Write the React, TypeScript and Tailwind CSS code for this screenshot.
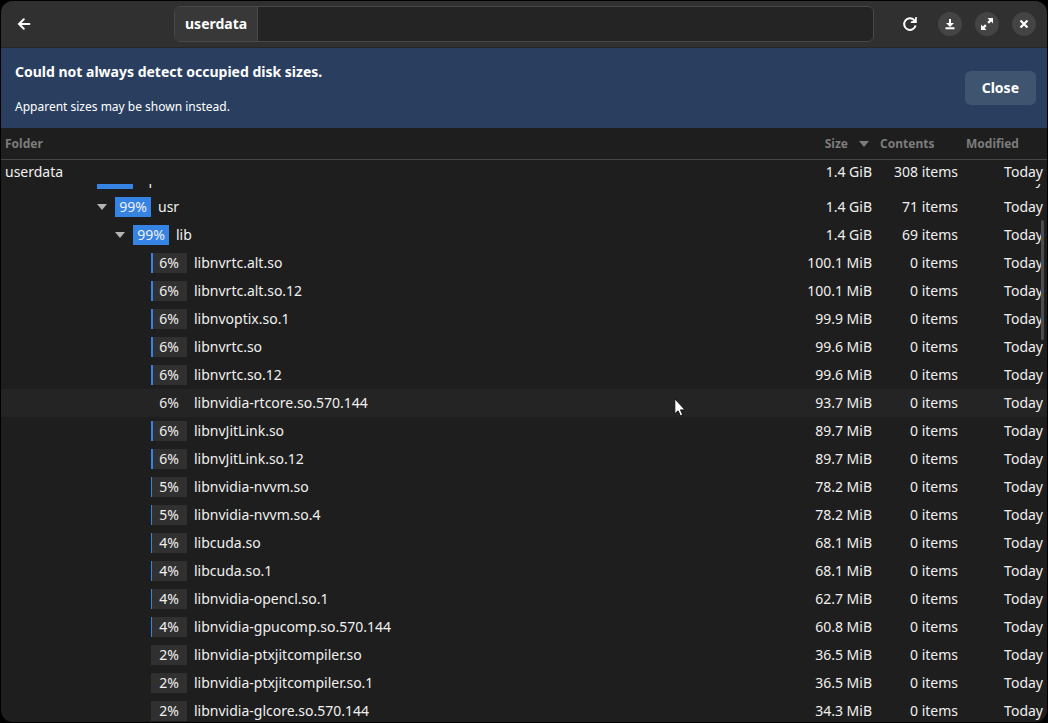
import { useLayoutEffect, useRef, useState } from "react";

interface FolderRow {
  name: string;
  depth: number;
  percent: number;
  size: string;
  items: string;
  expanded?: boolean;
}

const rows: FolderRow[] = [
  { name: "opt", depth: 3, percent: 99, size: "1.4 GiB", items: "72 items", expanded: true },
  { name: "usr", depth: 4, percent: 99, size: "1.4 GiB", items: "71 items", expanded: true },
  { name: "lib", depth: 5, percent: 99, size: "1.4 GiB", items: "69 items", expanded: true },
  { name: "libnvrtc.alt.so", depth: 6, percent: 6, size: "100.1 MiB", items: "0 items" },
  { name: "libnvrtc.alt.so.12", depth: 6, percent: 6, size: "100.1 MiB", items: "0 items" },
  { name: "libnvoptix.so.1", depth: 6, percent: 6, size: "99.9 MiB", items: "0 items" },
  { name: "libnvrtc.so", depth: 6, percent: 6, size: "99.6 MiB", items: "0 items" },
  { name: "libnvrtc.so.12", depth: 6, percent: 6, size: "99.6 MiB", items: "0 items" },
  { name: "libnvidia-rtcore.so.570.144", depth: 6, percent: 6, size: "93.7 MiB", items: "0 items" },
  { name: "libnvJitLink.so", depth: 6, percent: 6, size: "89.7 MiB", items: "0 items" },
  { name: "libnvJitLink.so.12", depth: 6, percent: 6, size: "89.7 MiB", items: "0 items" },
  { name: "libnvidia-nvvm.so", depth: 6, percent: 5, size: "78.2 MiB", items: "0 items" },
  { name: "libnvidia-nvvm.so.4", depth: 6, percent: 5, size: "78.2 MiB", items: "0 items" },
  { name: "libcuda.so", depth: 6, percent: 4, size: "68.1 MiB", items: "0 items" },
  { name: "libcuda.so.1", depth: 6, percent: 4, size: "68.1 MiB", items: "0 items" },
  { name: "libnvidia-opencl.so.1", depth: 6, percent: 4, size: "62.7 MiB", items: "0 items" },
  { name: "libnvidia-gpucomp.so.570.144", depth: 6, percent: 4, size: "60.8 MiB", items: "0 items" },
  { name: "libnvidia-ptxjitcompiler.so", depth: 6, percent: 2, size: "36.5 MiB", items: "0 items" },
  { name: "libnvidia-ptxjitcompiler.so.1", depth: 6, percent: 2, size: "36.5 MiB", items: "0 items" },
  { name: "libnvidia-glcore.so.570.144", depth: 6, percent: 2, size: "34.3 MiB", items: "0 items" },
];

function Columns() {
  return (
    <colgroup>
      <col />
      <col className="w-[86px]" />
      <col className="w-[86px]" />
      <col className="w-[85px]" />
    </colgroup>
  );
}

function UsageBadge({ percent, hovered }: { percent: number; hovered: boolean }) {
  // Whole pixels only, so anything under 3% has no bar
  const barWidth = percent === 99 ? 36 : Math.floor((percent / 100) * 36);
  return (
    <span className={`relative block h-5 w-9 shrink-0 text-center leading-5 ${hovered ? "" : "bg-[#303030]"}`}>
      {!hovered && (
        <span
          className="absolute inset-y-0 left-0 bg-[#3584e4]"
          style={{ width: barWidth }}
        />
      )}
      <span className="relative">{percent}%</span>
    </span>
  );
}

function HeaderBar() {
  return (
    <header className="flex h-[47px] shrink-0 items-center border-b border-[#262626] bg-[#303030] pr-[11px] text-white">
      <button aria-label="Back" className="ml-[15px] flex size-4 items-center justify-center">
        <svg viewBox="0 0 16 16" className="size-4" fill="none" stroke="currentColor" strokeWidth="2" strokeLinecap="round">
          <path d="M13.4 8H3.4M7.8 3.2 3 8l4.8 4.8" />
        </svg>
      </button>
      <nav className="mr-7 ml-[142px] flex h-9 flex-1 overflow-hidden rounded-md border border-[#484848] bg-[#242424]">
        <button className="border-r border-[#484848] bg-[#383838] px-[10px] text-sm font-bold">userdata</button>
      </nav>
      <div className="flex items-center">
        <button aria-label="Rescan" className="mr-5 flex size-4 items-center justify-center">
          <svg viewBox="0 0 16 16" className="size-4" fill="none">
            <path d="M13.6 9.5A5.8 5.8 0 1 1 12.3 4.2" stroke="currentColor" strokeWidth="2" />
            <path d="M14.8 1v6H8.8V5.6L10.8 5l2.4-2.4V1z" fill="currentColor" />
          </svg>
        </button>
        <div className="flex gap-[13px]">
          <button aria-label="Minimize" className="flex size-6 items-center justify-center rounded-full bg-[#444444]">
            <svg viewBox="0 0 12 12" className="size-3" fill="currentColor">
              <path d="M5 1h2v4h3L6 9 2 5h3zM1.5 9.3h9v1.9h-9z" />
            </svg>
          </button>
          <button aria-label="Maximize" className="flex size-6 items-center justify-center rounded-full bg-[#444444]">
            <svg viewBox="0 0 12 12" className="size-3" fill="currentColor">
              <path d="M6.5 0H12v5.5L10.1 3.6 8 5.7 6.3 4 8.4 1.9zM5.5 12H0V6.5l1.9 1.9L4 6.3 5.7 8l-2.1 2.1z" />
            </svg>
          </button>
          <button aria-label="Close window" className="flex size-6 items-center justify-center rounded-full bg-[#444444]">
            <svg viewBox="0 0 12 12" className="size-3" stroke="currentColor" strokeWidth="2.2">
              <path d="M2.5 2.5l7 7M9.5 2.5l-7 7" />
            </svg>
          </button>
        </div>
      </div>
    </header>
  );
}

function InfoBanner() {
  return (
    <section className="flex h-20 shrink-0 items-center justify-between bg-[#2a3f5f] pr-[11px] pl-[14px] text-white">
      <div className="flex flex-col gap-4 pt-[2px]">
        <p className="text-sm leading-5 font-bold">Could not always detect occupied disk sizes.</p>
        <p className="text-xs leading-[18px]">Apparent sizes may be shown instead.</p>
      </div>
      <button className="h-[34px] rounded-md bg-[#3f556f] px-[17px] text-sm font-bold">Close</button>
    </section>
  );
}

export default function App() {
  const [hoveredName, setHoveredName] = useState("libnvidia-rtcore.so.570.144");
  const listRef = useRef<HTMLDivElement>(null);

  // Start slightly scrolled, so the parent folder slides under the root row
  useLayoutEffect(() => {
    if (listRef.current) listRef.current.scrollTop = 19;
  }, []);

  return (
    <div className="h-screen bg-black p-px font-['Noto_Sans',sans-serif] text-sm text-[#f0f0f0]">
      <main className="relative flex h-full flex-col overflow-hidden rounded-xl bg-[#1e1e1e]">
        <HeaderBar />
        <InfoBanner />

        <table className="w-full shrink-0 table-fixed border-collapse">
          <Columns />
          <thead>
            <tr className="h-[31px] border-b border-[#464646] text-left text-xs text-[#7c7c7c]">
              <th className="px-1 pt-[2px] pb-0 font-bold">Folder</th>
              <th className="px-1 pt-[2px] pb-0 font-bold">
                <button className="flex w-full items-center justify-end gap-[11px]">
                  Size
                  <svg viewBox="0 0 10 6" className="mr-[3px] h-[6px] w-[10px]" fill="currentColor">
                    <path d="M0 0h10L5 6z" />
                  </svg>
                </button>
              </th>
              <th className="px-1 pt-[2px] pb-0 font-bold">Contents</th>
              <th className="px-1 pt-[2px] pb-0 font-bold">Modified</th>
            </tr>
          </thead>
          <tbody>
            <tr className="h-[25px] text-right">
              <td className="px-1 text-left">userdata</td>
              <td className="px-1">1.4 GiB</td>
              <td className="px-1">308 items</td>
              <td className="px-1">Today</td>
            </tr>
          </tbody>
        </table>

        <div ref={listRef} className="min-h-0 flex-1 overflow-y-auto [scrollbar-width:none]">
          <table className="w-full table-fixed border-collapse">
            <Columns />
            <tbody>
              {rows.map((row) => {
                const hovered = row.name === hoveredName;
                return (
                  <tr
                    key={row.name}
                    onMouseEnter={() => setHoveredName(row.name)}
                    className={`h-7 text-right whitespace-nowrap ${hovered ? "bg-[#242424]" : ""}`}
                  >
                    <td className="p-0 text-left">
                      <div className="flex items-center" style={{ paddingLeft: 20 + row.depth * 18 }}>
                        <span className="mr-1 flex w-[18px] shrink-0 justify-center text-[#b4b4b4]">
                          {row.expanded && (
                            <svg viewBox="0 0 10 6" className="h-[6px] w-[10px]" fill="currentColor">
                              <path d="M0 0h10L5 6z" />
                            </svg>
                          )}
                        </span>
                        <UsageBadge percent={row.percent} hovered={hovered} />
                        <span className="ml-[7px]">{row.name}</span>
                      </div>
                    </td>
                    <td className="px-1 py-0">{row.size}</td>
                    <td className="px-1 py-0">{row.items}</td>
                    <td className="px-1 py-0">Today</td>
                  </tr>
                );
              })}
            </tbody>
          </table>
        </div>

        {/* Overlay scrollbar thumb */}
        <div className="absolute top-[219px] right-[3px] h-[120px] w-[3px] rounded-full bg-[#4c4c4c]" />

        {/* Mouse pointer */}
        <svg viewBox="0 0 12 19" className="pointer-events-none absolute top-[397px] left-[673px] h-[19px] w-3">
          <path
            d="M.8.8v15l3.3-3 2.2 5 2.4-1-2.2-4.9h4.6z"
            fill="#fff"
            stroke="#111"
            strokeWidth="1"
            strokeLinejoin="round"
          />
        </svg>
      </main>
    </div>
  );
}
